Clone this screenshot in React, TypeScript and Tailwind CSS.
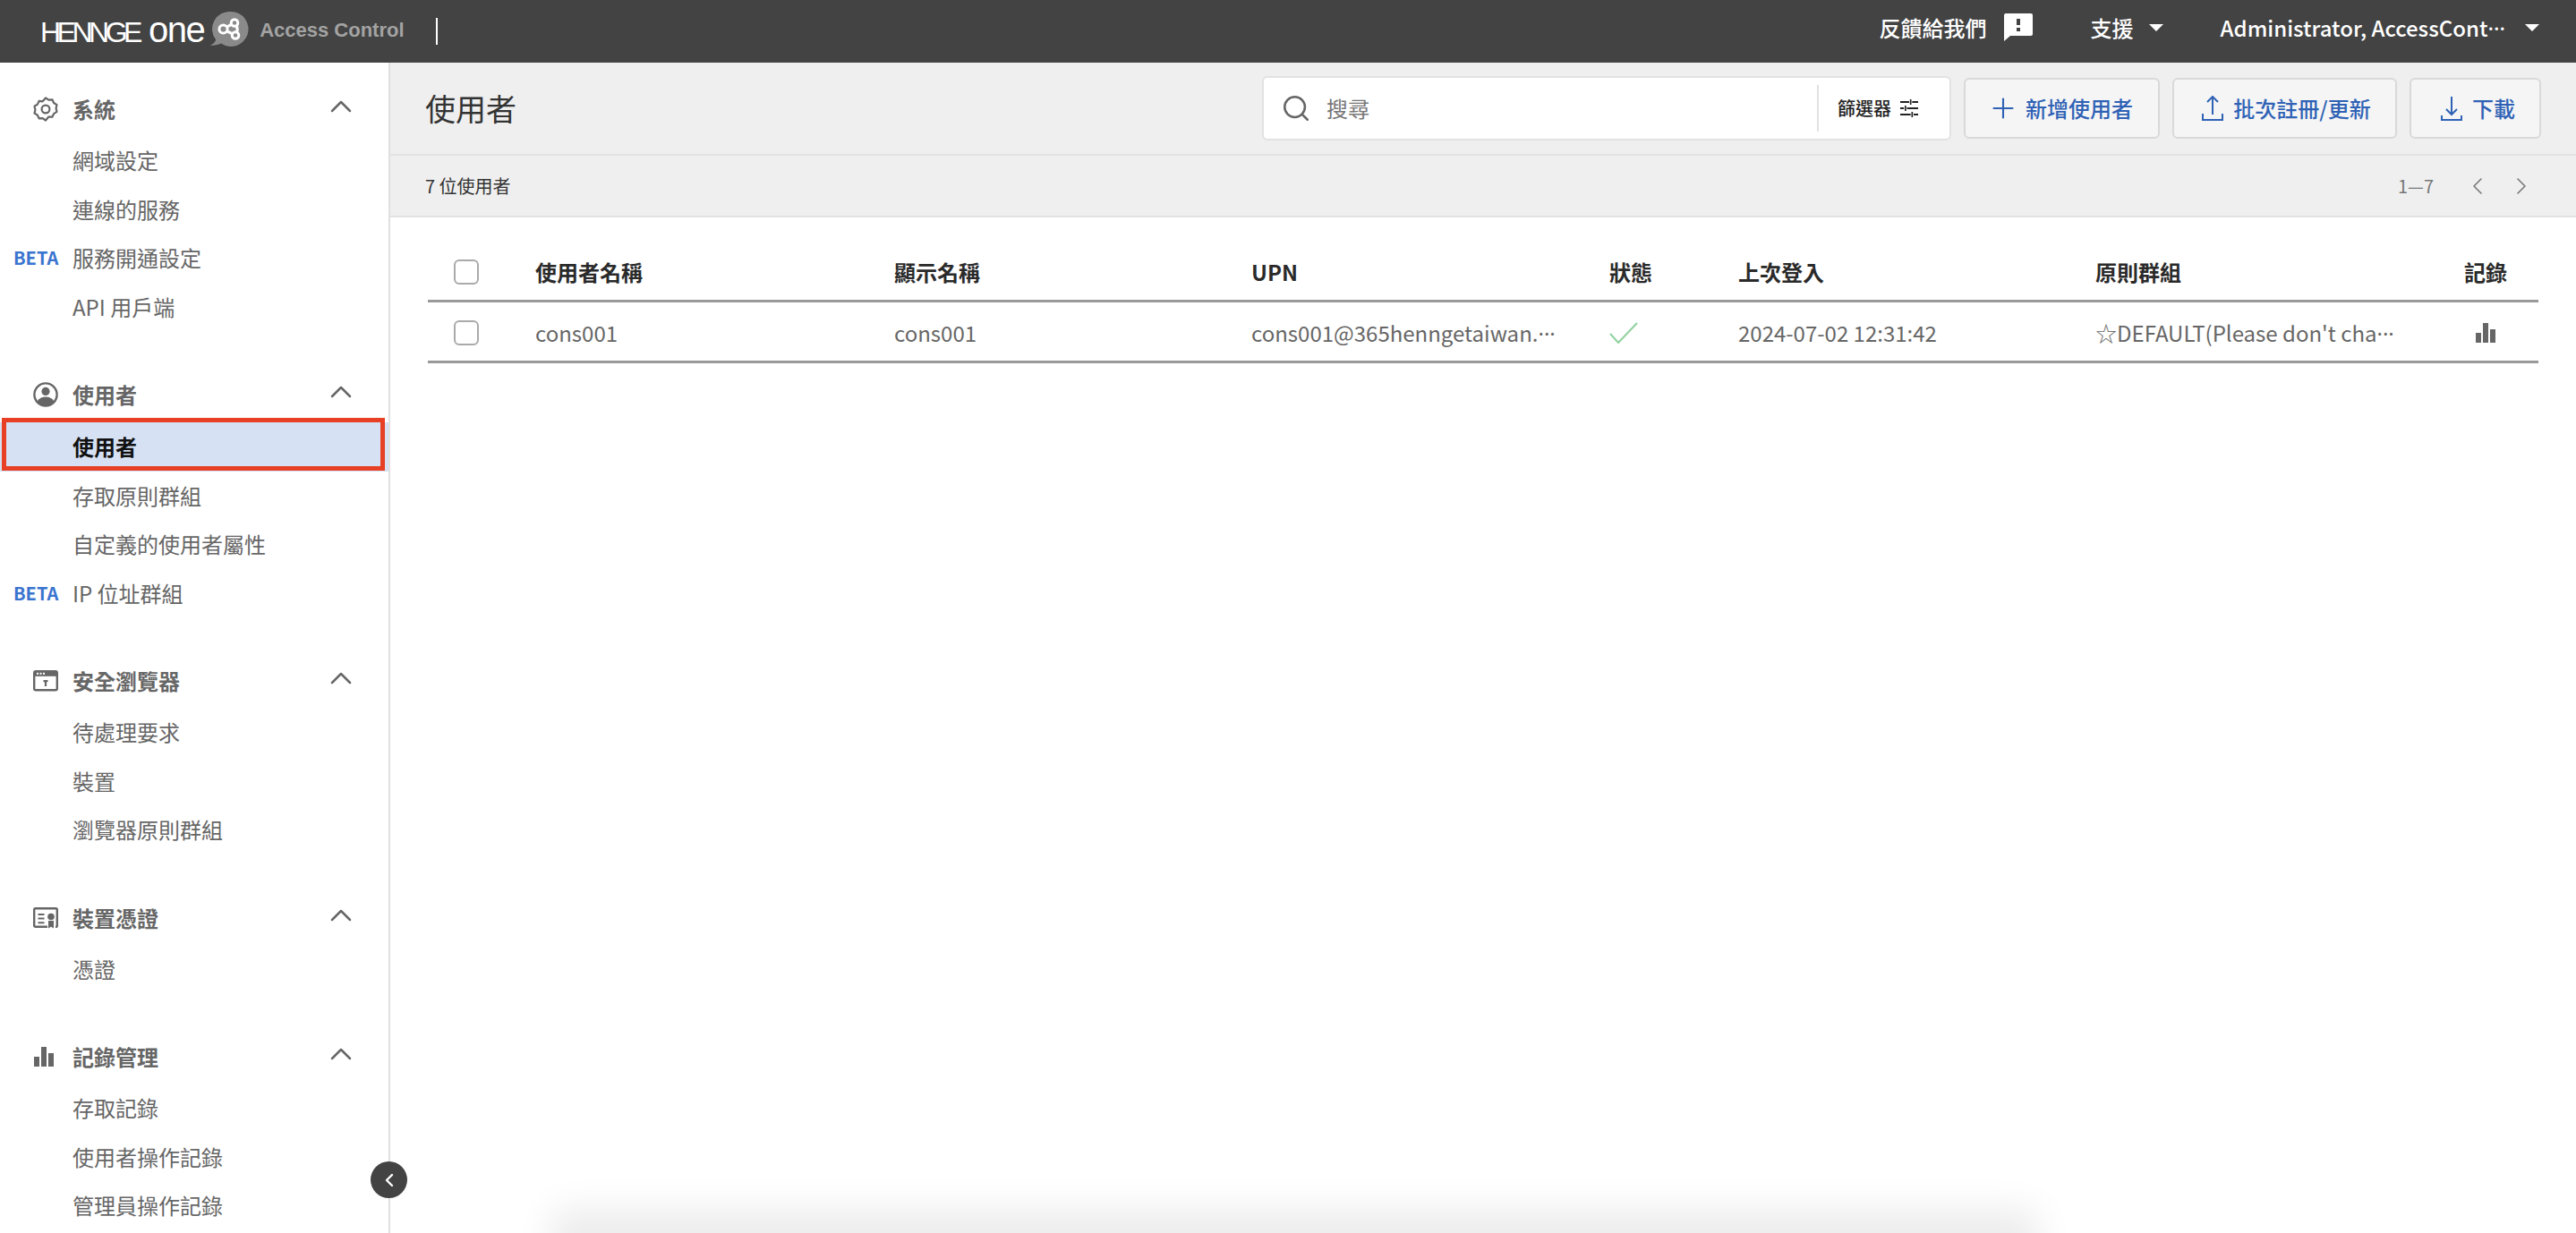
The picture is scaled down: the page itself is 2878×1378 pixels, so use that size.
import { ChevronLeft, ChevronRight, ChevronUp, Plus, Search } from "lucide-react";
import type { ReactNode } from "react";

const GearIcon = () => (
  <svg viewBox="0 0 28 28" className="h-7 w-7 fill-none stroke-[#666666] stroke-[2.2]">
    <path
      d="M14 1.5l3.4 2.2 4-.4 1.7 3.7 3.4 2.1-.9 4 .9 3.8-3.4 2.2-1.7 3.6-4-.2L14 26.5l-3.4-2.4-4 .2-1.7-3.6-3.4-2.2.9-3.8-.9-4 3.4-2.1 1.7-3.7 4 .4z"
      strokeLinejoin="round"
    />
    <circle cx="14" cy="14" r="4.4" />
  </svg>
);

const PersonIcon = () => (
  <svg viewBox="0 0 28 28" className="h-7 w-7">
    <circle cx="14" cy="14" r="12.6" fill="none" stroke="#666666" strokeWidth="2.4" />
    <circle cx="14" cy="10.4" r="4.6" fill="#666666" />
    <path d="M4.6 21.5C6.5 18 10 16.6 14 16.6s7.5 1.4 9.4 4.9C21.2 24.8 17.8 26.5 14 26.5S6.8 24.8 4.6 21.5z" fill="#666666" />
  </svg>
);

const BrowserIcon = () => (
  <svg viewBox="0 0 28 24" className="h-6 w-7">
    <rect x="1.2" y="1.2" width="25.6" height="21" rx="1.8" fill="none" stroke="#666666" strokeWidth="2.4" />
    <rect x="1.2" y="1.2" width="25.6" height="5.6" fill="#666666" />
    <rect x="4" y="2.8" width="2" height="2" fill="#ffffff" />
    <rect x="7.5" y="2.8" width="2" height="2" fill="#ffffff" />
    <rect x="11" y="2.8" width="2" height="2" fill="#ffffff" />
    <path d="M11.5 11h5v2.2h-1.4V18h-2.2v-4.8h-1.4z" fill="#666666" />
  </svg>
);

const CertIcon = () => (
  <svg viewBox="0 0 28 24" className="h-6 w-7">
    <path d="M16 21.8H2.6A1.4 1.4 0 0 1 1.2 20.4V2.6A1.4 1.4 0 0 1 2.6 1.2h22.8a1.4 1.4 0 0 1 1.4 1.4v17.8a1.4 1.4 0 0 1-1.4 1.4H25" fill="none" stroke="#666666" strokeWidth="2.4" />
    <path d="M5.5 7h7v2h-7zm0 4.6h7v2h-7zm0 4.6h7v2h-7z" fill="#666666" />
    <circle cx="20" cy="10.5" r="3.8" fill="#666666" />
    <path d="M17 15h6v8.5l-3-1.8-3 1.8z" fill="#666666" />
  </svg>
);

const BarsIcon = ({ className }: { className: string }) => (
  <svg viewBox="0 0 24 24" className={className}>
    <rect x="1" y="12" width="6" height="11" fill="#666666" />
    <rect x="9" y="1" width="6" height="22" fill="#666666" />
    <rect x="17" y="8" width="6" height="15" fill="#666666" />
  </svg>
);

const UploadIcon = () => (
  <svg viewBox="0 0 24 28" className="h-[28px] w-[24px] fill-none stroke-current stroke-2">
    <path d="M12 1v20M6 7l6-6 6 6M1 20v7h22v-7" />
  </svg>
);

const DownloadIcon = () => (
  <svg viewBox="0 0 24 28" className="h-[28px] w-[24px] fill-none stroke-current stroke-2">
    <path d="M12 1v20M6 15l6 6 6-6M1 22v5h22v-5" />
  </svg>
);

const Caret = () => <span className="block h-0 w-0 border-x-[8px] border-t-[8px] border-x-transparent border-t-white" />;

// truncation dots sit mid-height; the CJK middle dot is full width, the latin one is not
const Dots = () => <span className="font-['Noto_Sans',sans-serif]">···</span>;

type NavGroupProps = {
  icon: ReactNode;
  title: string;
  children: ReactNode;
  gap?: boolean;
};

const NavGroup = ({ icon, title, children, gap }: NavGroupProps) => (
  <div className="mb-[41px]">
    <div className={`flex h-[60px] items-center pr-[33px] ${gap ? "mb-px" : ""}`}>
      <span className="flex w-[81px] pl-[37px]">{icon}</span>
      <span className="flex-1 text-2xl font-bold leading-none text-[#666666]">{title}</span>
      <ChevronUp size={40} strokeWidth={1.5} className="-mt-[6px] text-[#666666]" />
    </div>
    {children}
  </div>
);

const NavItem = ({ label, beta }: { label: string; beta?: boolean }) => (
  <div className="flex h-[54.5px] items-center">
    <span className="w-[81px] pl-[15px] text-[20px] font-bold leading-none text-[#3a74cf]">{beta ? "BETA" : ""}</span>
    <span className="text-2xl leading-none text-[#666666]">{label}</span>
  </div>
);

const ActiveNavItem = ({ label }: { label: string }) => (
  <div className="relative flex h-[54.5px] items-center bg-[#d6e2f3]">
    <span className="w-[81px]" />
    <span className="text-2xl font-bold leading-none text-[#111111]">{label}</span>
    <div className="absolute -top-[5px] left-[2px] h-[59px] w-[428px] border-[5px] border-[#e74025]" />
  </div>
);

const Sidebar = () => (
  <aside className="relative w-[436px] shrink-0 border-r-2 border-[#e0e0e0] bg-white pt-[22px]">
    <NavGroup icon={<GearIcon />} title="系統">
      <NavItem label="網域設定" />
      <NavItem label="連線的服務" />
      <NavItem label="服務開通設定" beta />
      <NavItem label="API 用戶端" />
    </NavGroup>
    <NavGroup icon={<PersonIcon />} title="使用者" gap>
      <ActiveNavItem label="使用者" />
      <NavItem label="存取原則群組" />
      <NavItem label="自定義的使用者屬性" />
      <NavItem label="IP 位址群組" beta />
    </NavGroup>
    <NavGroup icon={<BrowserIcon />} title="安全瀏覽器">
      <NavItem label="待處理要求" />
      <NavItem label="裝置" />
      <NavItem label="瀏覽器原則群組" />
    </NavGroup>
    <NavGroup icon={<CertIcon />} title="裝置憑證">
      <NavItem label="憑證" />
    </NavGroup>
    <NavGroup icon={<BarsIcon className="h-6 w-6" />} title="記錄管理">
      <NavItem label="存取記錄" />
      <NavItem label="使用者操作記錄" />
      <NavItem label="管理員操作記錄" />
    </NavGroup>
    <button className="absolute left-[414px] top-[1228px] flex h-[41px] w-[41px] items-center justify-center rounded-full bg-[#434343] text-white">
      <ChevronLeft size={24} strokeWidth={2.4} />
    </button>
  </aside>
);

const TopBar = () => (
  <header className="flex h-[70px] shrink-0 items-center bg-[#434343] pl-[45px] pr-[41px] text-white">
    <div className="-mt-[5px] flex items-baseline font-['Liberation_Sans',sans-serif] leading-none">
      <span className="text-[32px] tracking-[-4.5px]">HENNGE</span>
      <span className="ml-[11px] text-[40px] tracking-[-1.5px]">one</span>
    </div>
    <svg viewBox="0 0 44 46" className="-mt-[4px] ml-[6px] h-[46px] w-[44px]">
      <path d="M24 3a19.5 19.5 0 1 1-11 35.6C9 40.5 5 41 1 40.5c3-1 5-3 6.2-6A19.5 19.5 0 0 1 24 3z" fill="#8a8a8a" />
      <path d="M15 22.5L28 15.5c4 4 4 10 1 14z" fill="none" stroke="#ffffff" strokeWidth="3.2" strokeLinejoin="round" />
      <circle cx="15.5" cy="22.5" r="4.6" fill="#8a8a8a" stroke="#ffffff" strokeWidth="3" />
      <circle cx="28" cy="15.5" r="3.8" fill="#8a8a8a" stroke="#ffffff" strokeWidth="3" />
      <circle cx="29" cy="29.5" r="3.8" fill="#8a8a8a" stroke="#ffffff" strokeWidth="3" />
    </svg>
    <span className="-mt-[2px] ml-[12px] font-['Liberation_Sans',sans-serif] text-[22px] font-bold leading-none text-[#a3a3a3]">
      Access Control
    </span>
    <span className="-mt-[1px] ml-[35px] h-[30px] w-[2px] bg-white" />
    <span className="flex-1" />
    <span className="-mt-[8px] text-2xl font-medium leading-none">反饋給我們</span>
    <svg viewBox="0 0 34 32" className="-mt-[11px] ml-[18px] h-[32px] w-[34px]">
      <path d="M3 1h28a2 2 0 0 1 2 2v21a2 2 0 0 1-2 2H8l-7 6V3a2 2 0 0 1 2-2z" fill="#ffffff" />
      <rect x="15" y="7" width="4" height="7" fill="#434343" />
      <rect x="15" y="17" width="4" height="4" fill="#434343" />
    </svg>
    <span className="-mt-[8px] ml-[64px] text-2xl font-medium leading-none">支援</span>
    <span className="-mt-[8px] ml-[17px]">
      <Caret />
    </span>
    <span className="-mt-[8px] ml-[64px] whitespace-nowrap text-2xl font-medium leading-none">
      Administrator, AccessCont
      <Dots />
    </span>
    <span className="-mt-[8px] ml-[22px]">
      <Caret />
    </span>
  </header>
);

const ActionButton = ({ icon, label, className }: { icon: ReactNode; label: string; className: string }) => (
  <button className={`flex h-[68px] items-center justify-center rounded-md border-2 border-[#d9d9d9] bg-[#f5f5f5] text-2xl font-medium leading-none text-[#2f62b5] ${className}`}>
    {icon}
    {label}
  </button>
);

const Toolbar = () => (
  <div className="flex h-[104px] shrink-0 items-center gap-[14px] border-b-2 border-[#e2e2e2] bg-[#efefef] pl-[39px] pr-[39px]">
    <h1 className="flex-1 text-[34px] font-normal leading-none text-[#333333]">使用者</h1>
    <div className="flex h-[72px] w-[770px] items-center rounded-md border-2 border-[#e2e2e2] bg-white pl-[19px]">
      <Search size={34} strokeWidth={1.8} className="text-[#666666]" />
      <span className="ml-[17px] flex-1 text-2xl leading-none text-[#777777]">搜尋</span>
      <div className="flex h-[52px] items-center border-l-2 border-[#e2e2e2] pl-[21px] pr-[35px]">
        <span className="text-[20px] font-medium leading-none text-[#222222]">篩選器</span>
        <svg viewBox="0 0 24 20" preserveAspectRatio="none" className="ml-[10px] h-[20px] w-[20px] stroke-[#222222] stroke-2">
          <path d="M0 3h12M16 3h8M14 0v6M0 10h5M9 10h15M7 7v6M0 17h14M18 17h6M16 14v6" fill="none" />
        </svg>
      </div>
    </div>
    <ActionButton icon={<Plus size={36} strokeWidth={1.4} />} label="新增使用者" className="w-[219px] gap-[7px] pr-[4px]" />
    <ActionButton icon={<UploadIcon />} label="批次註冊/更新" className="w-[251px] gap-[11px] pl-[4px]" />
    <ActionButton icon={<DownloadIcon />} label="下載" className="w-[147px] gap-[11px] pl-[6px]" />
  </div>
);

const CountBar = () => (
  <div className="flex h-[69px] shrink-0 items-center border-b-2 border-[#e2e2e2] bg-[#efefef] pl-[39px] pr-[45px]">
    <span className="flex-1 text-[20px] leading-none text-[#333333]">7 位使用者</span>
    <span className="text-[20px] leading-none text-[#777777]">1—7</span>
    <ChevronLeft size={32} strokeWidth={1.2} className="ml-[33px] text-[#777777]" />
    <ChevronRight size={32} strokeWidth={1.2} className="ml-[17px] text-[#777777]" />
  </div>
);

const Checkbox = () => <span className="block h-[28px] w-[28px] rounded-[6px] border-2 border-[#aaaaaa] bg-white" />;

const gridCols = "grid grid-cols-[120px_401px_399px_400px_144px_399px_412px_83px] items-center";

const UsersTable = () => (
  <div className="ml-[42px] mr-[42px] pt-[29px]">
    <div className={`${gridCols} h-[66px] border-b-[3px] border-[#999999] text-2xl font-bold leading-none text-[#2a2a2a]`}>
      <span className="pl-[29px]">
        <Checkbox />
      </span>
      <span>使用者名稱</span>
      <span>顯示名稱</span>
      <span>UPN</span>
      <span>狀態</span>
      <span>上次登入</span>
      <span>原則群組</span>
      <span>記錄</span>
    </div>
    <div className={`${gridCols} h-[68px] border-b-[3px] border-[#999999] pt-[3px] text-2xl leading-none text-[#666666]`}>
      <span className="pl-[29px]">
        <Checkbox />
      </span>
      <span>cons001</span>
      <span>cons001</span>
      <span className="whitespace-nowrap">
        cons001@365henngetaiwan.
        <Dots />
      </span>
      <svg viewBox="0 0 32 24" className="h-[24px] w-[32px] fill-none stroke-[#8fd19e] stroke-2">
        <path d="M1 13l9 10L31 1" />
      </svg>
      <span>2024-07-02 12:31:42</span>
      <span className="whitespace-nowrap">
        ☆DEFAULT(Please don't cha
        <Dots />
      </span>
      <span className="pl-[12px]">
        <BarsIcon className="h-[24px] w-[24px]" />
      </span>
    </div>
  </div>
);

export default function App() {
  return (
    <div className="flex h-[1378px] w-[2878px] flex-col overflow-hidden bg-white font-['Noto_Sans_CJK_TC','Noto_Sans',sans-serif]">
      <TopBar />
      <div className="flex min-h-0 flex-1">
        <Sidebar />
        <main className="relative min-w-0 flex-1">
          <Toolbar />
          <CountBar />
          <UsersTable />
          <div className="absolute left-[200px] top-full h-[30px] w-[1620px] shadow-[0_-6px_40px_20px_rgba(0,0,0,0.08)]" />
        </main>
      </div>
    </div>
  );
}
